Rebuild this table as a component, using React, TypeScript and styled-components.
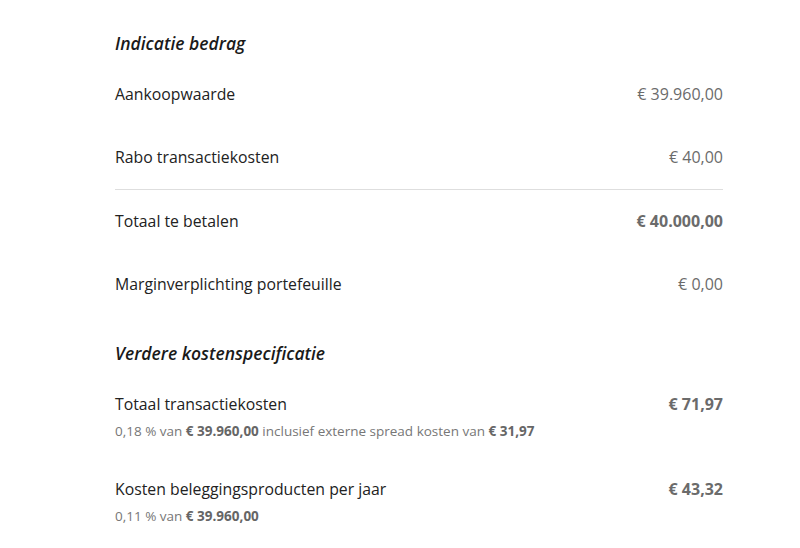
import React from "react";
import styled, { createGlobalStyle } from "styled-components";

const Global = createGlobalStyle`
  html, body { margin: 0; padding: 0; background: #fff; }
  body { font-family: "Open Sans", "Noto Sans", sans-serif; -webkit-font-smoothing: antialiased; }
`;

const Page = styled.div`
  width: 800px;
  min-height: 548px;
  box-sizing: border-box;
  padding: 31px 77px 0 115px;
`;

const Heading = styled.h2<{ $gap?: number }>`
  margin: ${(p) => p.$gap ?? 0}px 0 8px 0;
  font-size: 17.5px;
  line-height: 24px;
  font-style: italic;
  font-weight: 600;
  color: #1a1a1a;
`;

const Row = styled.div<{ $divider?: boolean; $compact?: boolean }>`
  display: flex;
  justify-content: space-between;
  align-items: flex-start;
  padding: 20px 0 ${(p) => (p.$compact ? 16 : 21)}px 0;
  border-top: ${(p) => (p.$divider ? "1px solid #dedede" : "none")};
`;

const LabelCol = styled.div`
  display: flex;
  flex-direction: column;
  gap: 5px;
`;

const Label = styled.div`
  font-size: 15.8px;
  line-height: 22px;
  color: #222;
`;

const Sub = styled.div`
  font-size: 13.5px;
  line-height: 22px;
  color: #777;
  b { font-weight: 700; color: #666; }
`;

const Value = styled.div<{ $bold?: boolean }>`
  font-size: 16px;
  line-height: 22px;
  color: #6b6b6b;
  font-weight: ${(p) => (p.$bold ? 700 : 400)};
  white-space: nowrap;
`;

export default function App() {
  return (
    <Page>
      <Global />
      <Heading>Indicatie bedrag</Heading>
      <Row>
        <Label>Aankoopwaarde</Label>
        <Value>€ 39.960,00</Value>
      </Row>
      <Row>
        <Label>Rabo transactiekosten</Label>
        <Value>€ 40,00</Value>
      </Row>
      <Row $divider>
        <Label>Totaal te betalen</Label>
        <Value $bold>€ 40.000,00</Value>
      </Row>
      <Row>
        <Label>Marginverplichting portefeuille</Label>
        <Value>€ 0,00</Value>
      </Row>
      <Heading $gap={25}>Verdere kostenspecificatie</Heading>
      <Row $compact>
        <LabelCol>
          <Label>Totaal transactiekosten</Label>
          <Sub>
            0,18 % van <b>€ 39.960,00</b> inclusief externe spread kosten van <b>€ 31,97</b>
          </Sub>
        </LabelCol>
        <Value $bold>€ 71,97</Value>
      </Row>
      <Row $compact>
        <LabelCol>
          <Label>Kosten beleggingsproducten per jaar</Label>
          <Sub>
            0,11 % van <b>€ 39.960,00</b>
          </Sub>
        </LabelCol>
        <Value $bold>€ 43,32</Value>
      </Row>
    </Page>
  );
}
